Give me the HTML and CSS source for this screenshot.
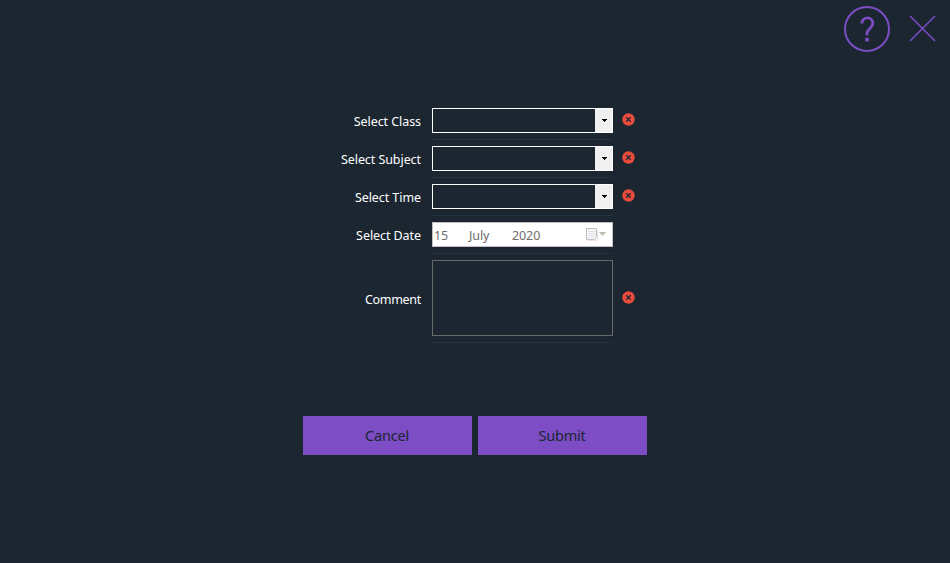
FILE: index.html
```html
<!DOCTYPE html>
<html lang="en">
<head>
<meta charset="utf-8">
<title>Class entry</title>
<link rel="stylesheet" href="styles.css">
</head>
<body>
<svg class="symbols" aria-hidden="true">
  <symbol id="error" viewBox="0 0 13 13">
    <circle cx="6.5" cy="6.5" r="6.2" fill="#e94b3d"/>
    <path d="M4.3 4.3 8.7 8.7M8.7 4.3 4.3 8.7" stroke="#1b2631" stroke-width="1.3"/>
  </symbol>
  <symbol id="arrow" viewBox="0 0 5 3"><path d="M0 0h5v1h-1v1h-1v1h-1v-1h-1v-1h-1z"/></symbol>
</svg>
<header class="toolbar">
  <svg class="help" viewBox="0 0 46 46">
    <circle cx="23" cy="23" r="22"/>
    <path class="hook" d="M17.9 17.6v-.3a5.4 5.4 0 0 1 10.9 0c0 4.8-5.8 5.6-5.8 10.4v1.5"/>
    <path class="dot" d="M21.2 31.8h3.6v3.6h-3.6z"/>
  </svg>
  <svg class="close" viewBox="0 0 28 28"><path d="M2 2 27 27M27 2 2 27"/></svg>
</header>
<main>
  <form class="form">
    <div class="row">
      <label class="class-label">Select Class</label>
      <div class="cell"><div class="combo"><span class="drop"><svg><use href="#arrow"/></svg></span></div></div>
      <svg class="error"><use href="#error"/></svg>
    </div>
    <div class="row">
      <label class="subject-label">Select Subject</label>
      <div class="cell"><div class="combo"><span class="drop"><svg><use href="#arrow"/></svg></span></div></div>
      <svg class="error"><use href="#error"/></svg>
    </div>
    <div class="row">
      <label class="time-label">Select Time</label>
      <div class="cell"><div class="combo"><span class="drop"><svg><use href="#arrow"/></svg></span></div></div>
      <svg class="error"><use href="#error"/></svg>
    </div>
    <div class="row">
      <label class="date-label">Select Date</label>
      <div class="cell">
        <div class="date">
          <span class="day">15</span><span class="month">July</span><span class="year">2020</span>
          <svg class="calendar" viewBox="0 0 21 14">
            <path d="M2 12.5h9.5V3" fill="none" stroke="#e8e6e8"/>
            <path d="M.5.5h10v9l-2 2h-8z" fill="#f7f7f9" stroke="#c2bdbd"/>
            <path d="M2.5 3.5h7M2.5 5.5h7M2.5 7.5h7M2.5 9.5h5" stroke="#ccd2e0" stroke-dasharray="1 1"/>
            <path d="M13 4h7l-3.5 4z" fill="#bcbeb3"/>
          </svg>
        </div>
      </div>
    </div>
    <div class="row comment-row">
      <label class="comment-label">Comment</label>
      <div class="cell"><div class="comment"></div></div>
      <svg class="error"><use href="#error"/></svg>
    </div>
  </form>
  <div class="actions">
    <button class="cancel" type="button">Cancel</button>
    <button class="submit" type="button">Submit</button>
  </div>
</main>
</body>
</html>
```
FILE: styles.css
```css
* { box-sizing: border-box; }
body {
  margin: 0;
  height: 563px;
  overflow: hidden;
  background: #1b2631;
  color: #fff;
  font: 13px/18px "Noto Sans", "Open Sans", sans-serif;
}
svg { display: block; flex: none; }
.symbols { display: none; }
.toolbar {
  display: flex;
  justify-content: flex-end;
  align-items: flex-start;
  gap: 18px;
  height: 108px;
  padding: 6px 14px 0 0;
}
.help { width: 46px; height: 46px; fill: none; stroke: #7c4dc4; stroke-width: 2; }
.help .hook { stroke-width: 2.9; }
.help .dot { fill: #7c4dc4; stroke: none; }
.close { width: 28px; height: 28px; margin-top: 8px; fill: none; stroke: #7c4dc4; stroke-width: 1.5; }
.form { display: grid; gap: 6px; width: 332px; margin-left: 303px; }
.row { display: grid; grid-template-columns: 118px 181px 13px; column-gap: 11px; height: 32px; }
.row .error { width: 13px; height: 13px; margin: 5px 0 0 -2px; }
label { padding-top: 5px; text-align: right; font-size: 12.5px; letter-spacing: -.07px; white-space: nowrap; }
.comment-label { letter-spacing: -.3px; }
.cell { border-bottom: 1px solid #253340; }
.combo { display: flex; justify-content: flex-end; height: 25px; border: 1px solid #fff; }
.drop { display: flex; width: 17px; padding: 10px 0 0 7px; background: #f0f0f0; }
.drop svg { width: 5px; height: 3px; }
.date {
  display: grid;
  grid-template-columns: 35px 43px 74px 21px;
  height: 25px;
  padding: 4px 0 0 1px;
  border: 1px solid #bfbfc1;
  background: #fff;
  color: #6d6d6d;
  font-size: 12.5px;
  letter-spacing: -.1px;
}
.calendar { width: 21px; height: 14px; margin-top: 1px; }
.comment-row { height: 83px; }
.comment-row label { padding-top: 31px; }
.comment-row .error { margin-top: 31px; }
.comment { height: 76px; border: 1px solid #696969; }
.actions { display: grid; grid-template-columns: 169px 169px; gap: 6px; margin: 73px 0 0 303px; }
button {
  height: 39px;
  padding: 0 1px 2px 0;
  border: 0;
  background: #7c4dc4;
  color: #1b2631;
  font: 14.5px/20px "Noto Sans", "Open Sans", sans-serif;
  letter-spacing: -.2px;
}
```
